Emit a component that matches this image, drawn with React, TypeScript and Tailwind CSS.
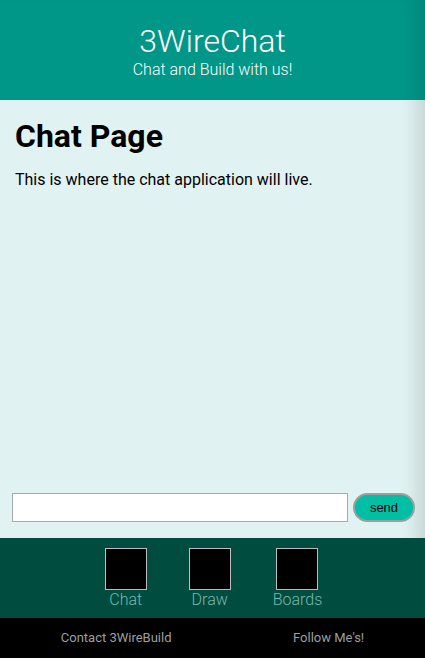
import { useState } from "react";

export default function App() {
  const [msg, setMsg] = useState("");

  return (
    <div className="flex h-[658px] w-full flex-col font-['Roboto',sans-serif]">
      {/* Header */}
      <header className="flex h-[100px] flex-col items-center justify-center bg-[#009688] text-white shadow-[inset_-22px_0_18px_-14px_rgba(0,0,0,0.1)]">
        <h1 className="pt-[1px] text-[32px] font-light leading-[38px]">3WireChat</h1>
        <p className="text-[16px] font-light leading-[20px]">Chat and Build with us!</p>
      </header>

      {/* Chat area */}
      <main className="flex flex-1 flex-col bg-[#e0f2f1] px-[15px] pb-4 shadow-[inset_-22px_0_18px_-14px_rgba(0,0,0,0.12)]">
        <h2 className="mt-[17px] text-[32px] font-bold leading-[38px] text-black">Chat Page</h2>
        <p className="mt-[15px] text-[16px] leading-[20px] text-black">
          This is where the chat application will live.
        </p>
        <div className="flex-1" />
        <div className="-ml-[3px] -mr-[6px] flex items-center gap-[5px]">
          <input
            value={msg}
            onChange={(e) => setMsg(e.target.value)}
            className="h-[29px] w-[336px] shrink-0 border border-[#a9a9a9] bg-white px-1 outline-none"
          />
          <button className="h-[29px] w-[62px] shrink-0 rounded-full border-2 border-[#9e9e9e] bg-[#00bfa5] font-['Liberation_Sans',sans-serif] text-[13px] text-black">
            send
          </button>
        </div>
      </main>

      {/* Nav */}
      <nav className="flex h-[80px] justify-center gap-[42px] bg-[#004d40] pl-[2px] pt-[10px]">
        {["Chat", "Draw", "Boards"].map((label) => (
          <div key={label} className="flex flex-col items-center">
            <div className="h-[42px] w-[42px] border border-[#bdbdbd] bg-black" />
            <span className="text-[16px] font-light leading-[20px] text-[#78b8ae]">{label}</span>
          </div>
        ))}
      </nav>

      {/* Footer */}
      <footer className="flex h-[40px] items-center justify-around bg-black text-[13px] text-[#9e9e9e]">
        <span>Contact 3WireBuild</span>
        <span>Follow Me's!</span>
      </footer>
    </div>
  );
}
